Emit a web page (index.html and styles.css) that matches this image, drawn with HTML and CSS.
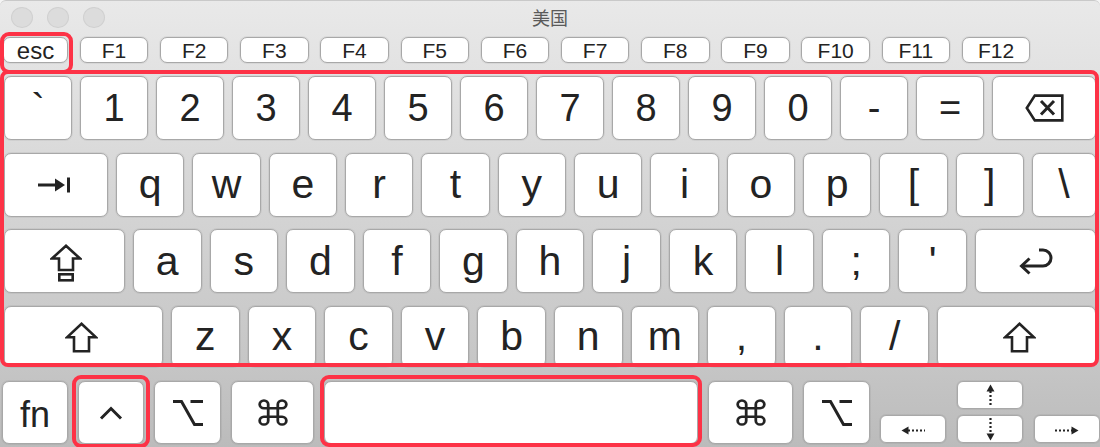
FILE: index.html
```html
<!DOCTYPE html>
<html lang="zh">
<head>
<meta charset="utf-8">
<title>美国</title>
<link rel="stylesheet" href="styles.css">
</head>
<body>
<div class="window">
  <div class="titlebar">
    <div class="lights"><span class="light"></span><span class="light"></span><span class="light"></span></div>
    <div class="title">美国</div>
  </div>

  <div class="frow">
    <div class="key fkey esc">esc</div>
    <div class="key fkey">F1</div>
    <div class="key fkey">F2</div>
    <div class="key fkey">F3</div>
    <div class="key fkey">F4</div>
    <div class="key fkey">F5</div>
    <div class="key fkey">F6</div>
    <div class="key fkey">F7</div>
    <div class="key fkey">F8</div>
    <div class="key fkey">F9</div>
    <div class="key fkey">F10</div>
    <div class="key fkey">F11</div>
    <div class="key fkey">F12</div>
  </div>

  <div class="main">
    <div class="row">
      <div class="key k">`</div>
      <div class="key k num">1</div>
      <div class="key k num">2</div>
      <div class="key k num">3</div>
      <div class="key k num">4</div>
      <div class="key k num">5</div>
      <div class="key k num">6</div>
      <div class="key k num">7</div>
      <div class="key k num">8</div>
      <div class="key k num">9</div>
      <div class="key k num">0</div>
      <div class="key k num">-</div>
      <div class="key k num">=</div>
      <div class="key k w104">
        <svg width="39" height="28" viewBox="0 0 39 28" class="ico"><path d="M1.8 14 L9.8 1.6 H37.3 V26.4 H9.8 Z" fill="none" stroke="#232323" stroke-width="2.6" stroke-linejoin="miter"/><path d="M16 7 L29 20.5 M29 7 L16 20.5" stroke="#232323" stroke-width="3" fill="none"/></svg>
      </div>
    </div>
    <div class="row">
      <div class="key k w104">
        <svg width="33" height="16" viewBox="0 0 33 16" class="ico tab"><path d="M0 8 H20" stroke="#232323" stroke-width="3"/><path d="M17 1.5 L27 8 L17 14.5 Z" fill="#232323"/><rect x="29" y="0.5" width="3" height="15" fill="#232323"/></svg>
      </div>
      <div class="key k">q</div>
      <div class="key k">w</div>
      <div class="key k">e</div>
      <div class="key k">r</div>
      <div class="key k">t</div>
      <div class="key k">y</div>
      <div class="key k">u</div>
      <div class="key k">i</div>
      <div class="key k">o</div>
      <div class="key k">p</div>
      <div class="key k">[</div>
      <div class="key k">]</div>
      <div class="key k w64">\</div>
    </div>
    <div class="row">
      <div class="key k w121">
        <svg width="32" height="38" viewBox="0 0 32 38" class="ico caps"><path d="M16 1.8 L30 14.5 H23 V26 H9 V14.5 H2 Z" fill="none" stroke="#232323" stroke-width="2.6" stroke-linejoin="miter"/><rect x="9.3" y="30.3" width="13.4" height="6" fill="none" stroke="#232323" stroke-width="2.6"/></svg>
      </div>
      <div class="key k">a</div>
      <div class="key k">s</div>
      <div class="key k">d</div>
      <div class="key k">f</div>
      <div class="key k">g</div>
      <div class="key k">h</div>
      <div class="key k">j</div>
      <div class="key k">k</div>
      <div class="key k">l</div>
      <div class="key k">;</div>
      <div class="key k">'</div>
      <div class="key k w121">
        <svg width="35" height="27" viewBox="0 0 35 27" class="ico"><path d="M21 2 H25 A8 8 0 0 1 25 18 H5" fill="none" stroke="#232323" stroke-width="3"/><path d="M11.5 10.5 L3.5 18 L11.5 25.5" fill="none" stroke="#232323" stroke-width="3"/></svg>
      </div>
    </div>
    <div class="row last">
      <div class="key k w159">
        <svg width="33" height="31" viewBox="0 0 33 31" class="ico shift"><path d="M16.5 1.8 L31 15.3 H24 V29.2 H9 V15.3 H2 Z" fill="none" stroke="#232323" stroke-width="2.6" stroke-linejoin="miter"/></svg>
      </div>
      <div class="key k">z</div>
      <div class="key k">x</div>
      <div class="key k">c</div>
      <div class="key k">v</div>
      <div class="key k">b</div>
      <div class="key k">n</div>
      <div class="key k">m</div>
      <div class="key k">,</div>
      <div class="key k">.</div>
      <div class="key k">/</div>
      <div class="key k w159">
        <svg width="33" height="31" viewBox="0 0 33 31" class="ico shift rs"><path d="M16.5 1.8 L31 15.3 H24 V29.2 H9 V15.3 H2 Z" fill="none" stroke="#232323" stroke-width="2.6" stroke-linejoin="miter"/></svg>
      </div>
    </div>
  </div>

  <div class="bottom">
    <div class="key b fn">fn</div>
    <div class="key b ctrl">
      <svg width="24" height="14" viewBox="0 0 24 14" class="ico"><path d="M2 12.5 L12 2.5 L22 12.5" fill="none" stroke="#232323" stroke-width="3"/></svg>
    </div>
    <div class="key b opt">
      <svg width="32" height="28" viewBox="0 0 32 28" class="ico"><path d="M1 2.5 H9.5 L22.5 25.5 H31 M18.5 2.5 H31" fill="none" stroke="#232323" stroke-width="3"/></svg>
    </div>
    <div class="key b cmd">
      <svg width="32" height="29" viewBox="0 0 30 30" preserveAspectRatio="none" class="ico"><path d="M10.5 10.5 V6.5 A4 4 0 1 0 6.5 10.5 H23.5 A4 4 0 1 0 19.5 6.5 V23.5 A4 4 0 1 0 23.5 19.5 H6.5 A4 4 0 1 0 10.5 23.5 Z" fill="none" stroke="#232323" stroke-width="2.6"/></svg>
    </div>
    <div class="key b space"></div>
    <div class="key b cmd2">
      <svg width="32" height="29" viewBox="0 0 30 30" preserveAspectRatio="none" class="ico"><path d="M10.5 10.5 V6.5 A4 4 0 1 0 6.5 10.5 H23.5 A4 4 0 1 0 19.5 6.5 V23.5 A4 4 0 1 0 23.5 19.5 H6.5 A4 4 0 1 0 10.5 23.5 Z" fill="none" stroke="#232323" stroke-width="2.6"/></svg>
    </div>
    <div class="key b opt">
      <svg width="32" height="28" viewBox="0 0 32 28" class="ico"><path d="M1 2.5 H9.5 L22.5 25.5 H31 M18.5 2.5 H31" fill="none" stroke="#232323" stroke-width="3"/></svg>
    </div>
    <div class="arrows">
      <div class="key akey up">
        <svg width="9" height="23" viewBox="0 0 9 23" class="ico"><path d="M0.5 7.5 L4.5 0.5 L8.5 7.5 Z" fill="#232323"/><path d="M4.5 7 V23" stroke="#232323" stroke-width="2.2" stroke-dasharray="2 2"/></svg>
      </div>
      <div class="key akey left">
        <svg width="24" height="9" viewBox="0 0 24 9" class="ico"><path d="M7.5 0.5 L0.5 4.5 L7.5 8.5 Z" fill="#232323"/><path d="M7 4.5 H24" stroke="#232323" stroke-width="2.2" stroke-dasharray="2 2"/></svg>
      </div>
      <div class="key akey down">
        <svg width="9" height="23" viewBox="0 0 9 23" class="ico"><path d="M0.5 15.5 L4.5 22.5 L8.5 15.5 Z" fill="#232323"/><path d="M4.5 0 V16" stroke="#232323" stroke-width="2.2" stroke-dasharray="2 2"/></svg>
      </div>
      <div class="key akey right">
        <svg width="24" height="9" viewBox="0 0 24 9" class="ico"><path d="M16.5 0.5 L23.5 4.5 L16.5 8.5 Z" fill="#232323"/><path d="M0 4.5 H17" stroke="#232323" stroke-width="2.2" stroke-dasharray="2 2"/></svg>
      </div>
    </div>
  </div>

  <div class="hl hl-esc"></div>
  <div class="hl hl-main"></div>
  <div class="hl hl-ctrl"></div>
  <div class="hl hl-space"></div>
</div>
</body>
</html>
```

FILE: styles.css
```css
* { box-sizing: border-box; }

html, body {
  margin: 0;
  padding: 0;
  background: #f4f4f4;
}

body {
  width: 1100px;
  height: 447px;
  overflow: hidden;
  font-family: "Liberation Sans", Arial, sans-serif;
  color: #232323;
}

.window {
  position: relative;
  width: 1100px;
  height: 447px;
  border-radius: 6px 6px 0 0;
  border-top: 1px solid #c9c9c9;
  background: linear-gradient(to bottom, #e9e9e9 0px, #e2e2e2 70px, #d3d3d3 220px, #c6c6c6 360px, #bbbbbb 447px);
  overflow: hidden;
}

.titlebar {
  position: relative;
  height: 35px;
  display: flex;
  align-items: center;
  justify-content: center;
}

.lights {
  position: absolute;
  left: 11px;
  top: 6px;
  display: flex;
  gap: 14px;
}

.light {
  width: 22px;
  height: 21px;
  border-radius: 50%;
  background: #dcdcdc;
  border: 1px solid #d0d0d0;
}

.title {
  font-family: "Noto Sans CJK SC", "Noto Sans", sans-serif;
  font-size: 18px;
  color: #5a5a5a;
  margin-top: -3px;
}

.key {
  background: #ffffff;
  border: 1px solid #a8a8a8;
  box-shadow: 0 0 0 1px rgba(0, 0, 0, 0.05);
  border-radius: 7px;
  display: flex;
  align-items: center;
  justify-content: center;
  color: #232323;
}

.frow {
  display: flex;
  gap: 11.8px;
  padding-left: 3px;
  height: 26px;
  margin-top: 1px;
}

.fkey {
  width: 68.4px;
  height: 26px;
  font-size: 21px;
  border-radius: 7px;
  padding-top: 1px;
}

.fkey.esc {
  width: 65px;
  font-size: 24px;
}

.main {
  margin-top: 13px;
  padding-left: 4px;
  width: 1096px;
  display: flex;
  flex-direction: column;
  gap: 12.5px;
}

.row {
  display: flex;
  gap: 8px;
  height: 64px;
}

.row.last {
  height: 61px;
}

.k {
  flex: 1 1 0;
  font-size: 41px;
  line-height: 1;
}

.k.num {
  font-size: 38px;
}

.w104 { flex: 0 0 104px; }
.w64 { flex: 0 0 64px; }
.w121 { flex: 0 0 121px; }
.w159 { flex: 0 0 159px; }

.ico { display: block; }
.tab { margin-left: -4px; }
.caps { margin-top: 4px; margin-left: 2px; }
.shift { margin-top: 2px; margin-left: -4px; }
.shift.rs { margin-left: 6px; }

.bottom {
  position: absolute;
  left: 2px;
  top: 380px;
  display: flex;
  gap: 10px;
  height: 63px;
}

.b {
  height: 63px;
}

.fn { width: 66px; font-size: 36px; padding-top: 4px; }
.ctrl { width: 66px; }
.opt { width: 67px; }
.cmd { width: 83px; }
.space { width: 374px; }
.cmd2 { width: 85px; }

.arrows {
  display: grid;
  grid-template-columns: 66px 66px 66px;
  grid-template-rows: 28px 28px;
  column-gap: 11px;
  row-gap: 6px;
}

.akey { border-radius: 6px; }
.akey.up { grid-column: 2; grid-row: 1; }
.akey.left { grid-column: 1; grid-row: 2; align-items: flex-end; padding-bottom: 7px; }
.akey.down { grid-column: 2; grid-row: 2; align-items: flex-end; padding-bottom: 1px; }
.akey.right { grid-column: 3; grid-row: 2; align-items: flex-end; padding-bottom: 7px; }

.hl {
  position: absolute;
  border: 4px solid #fd3246;
  border-radius: 9px;
  pointer-events: none;
}

.hl-esc { left: 0; top: 31px; width: 73px; height: 42px; }
.hl-main { left: 0; top: 69px; width: 1099px; height: 297px; border-radius: 8px; }
.hl-ctrl { left: 72px; top: 374px; width: 78px; height: 73px; }
.hl-space { left: 320px; top: 374px; width: 382px; height: 72px; }
```
